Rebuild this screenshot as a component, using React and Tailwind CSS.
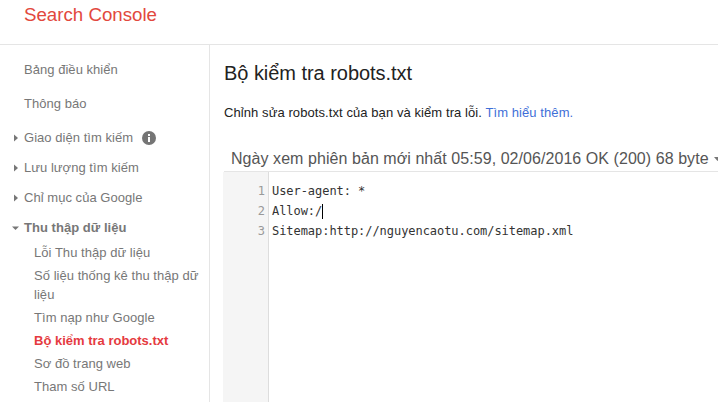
const Arrow = ({ open }) => (
  <svg width="8" height="8" viewBox="0 0 8 8" className="shrink-0">
    {open ? <path d="M0 2.5H7L3.5 6z" fill="#777" /> : <path d="M2 0.5V7.5L6 4z" fill="#777" />}
  </svg>
);

const Top = ({ children, className = "" }) => (
  <div className={`flex h-[30px] items-center pl-6 ${className}`}>{children}</div>
);

const Group = ({ children, open, bold }) => (
  <div className={`flex h-[30px] items-center gap-[4px] pl-3 ${bold ? "font-bold" : ""}`}>
    <Arrow open={open} />
    {children}
  </div>
);

const Sub = ({ children, active }) => (
  <div className={`py-[2px] pl-[34px] pr-2 leading-[19px] ${active ? "font-bold tracking-normal text-[#e53a40]" : ""}`}>{children}</div>
);

export default function App() {
  return (
    <div className="flex h-[402px] w-[718px] flex-col overflow-hidden bg-white font-['Liberation_Sans',Arial,sans-serif]">
      <header className="h-[45px] shrink-0 border-b border-[#e5e5e5] pl-6 pt-[3px] text-[18.7px] leading-[23px] text-[#e2483d]">
        Search Console
      </header>
      <div className="flex min-h-0 flex-1">
        <aside className="w-[210px] shrink-0 border-r border-[#e5e5e5] pt-[10px] text-[13px] tracking-[0.04px] text-[#777]">
          <Top className="mb-1">Bảng điều khiển</Top>
          <Top className="mb-1">Thông báo</Top>
          <Group>
            Giao diện tìm kiếm
            <svg width="14" height="14" viewBox="0 0 14 14" className="ml-[5px]">
              <circle cx="7" cy="7" r="7" fill="#757575" />
              <rect x="6" y="6" width="2" height="5" fill="#fff" />
              <rect x="6" y="3" width="2" height="2" fill="#fff" />
            </svg>
          </Group>
          <Group>Lưu lượng tìm kiếm</Group>
          <Group>Chỉ mục của Google</Group>
          <Group open bold>Thu thập dữ liệu</Group>
          <div className="-mt-[2px]">
            <Sub>Lỗi Thu thập dữ liệu</Sub>
            <Sub>Số liệu thống kê thu thập dữ liệu</Sub>
            <Sub>Tìm nạp như Google</Sub>
            <Sub active>Bộ kiểm tra robots.txt</Sub>
            <Sub>Sơ đồ trang web</Sub>
            <Sub>Tham số URL</Sub>
          </div>
        </aside>
        <main className="min-w-0 flex-1 pl-[14px]">
          <h1 className="pt-[15px] text-[20px] leading-[26px] tracking-[-0.04px] text-[#222]">Bộ kiểm tra robots.txt</h1>
          <p className="mt-[18px] text-[13px] leading-[18px] tracking-[0.08px] text-[#222]">
            Chỉnh sửa robots.txt của bạn và kiểm tra lỗi. <span className="text-[#3f6fd8]">Tìm hiểu thêm.</span>
          </p>
          <div className="mt-[20px] flex h-[30px] items-center gap-[5px] whitespace-nowrap border-b border-[#e5e5e5] pl-[7px] pt-[5px] text-[16px] tracking-[0.06px] text-[#555]">
            Ngày xem phiên bản mới nhất 05:59, 02/06/2016 OK (200) 68 byte
            <svg width="8" height="6" viewBox="0 0 8 6" className="shrink-0"><path d="M0 1H7L3.5 5z" fill="#777" /></svg>
          </div>
          <div className="-ml-px flex h-[300px] font-['DejaVu_Sans_Mono',monospace] text-[12px] leading-[20px] tracking-[-0.05px]">
            <div className="w-[46px] shrink-0 border-r border-[#ddd] bg-[#f5f5f5] pr-[3px] pt-[9px] text-right text-[#999]">
              <div>1</div>
              <div>2</div>
              <div>3</div>
            </div>
            <div className="pl-[3px] pt-[9px] text-[#333]">
              <div>User-agent: *</div>
              <div className="flex items-center">Allow:/<span className="h-[15px] w-px bg-black" /></div>
              <div>Sitemap:http://nguyencaotu.com/sitemap.xml</div>
            </div>
          </div>
        </main>
      </div>
    </div>
  );
}
